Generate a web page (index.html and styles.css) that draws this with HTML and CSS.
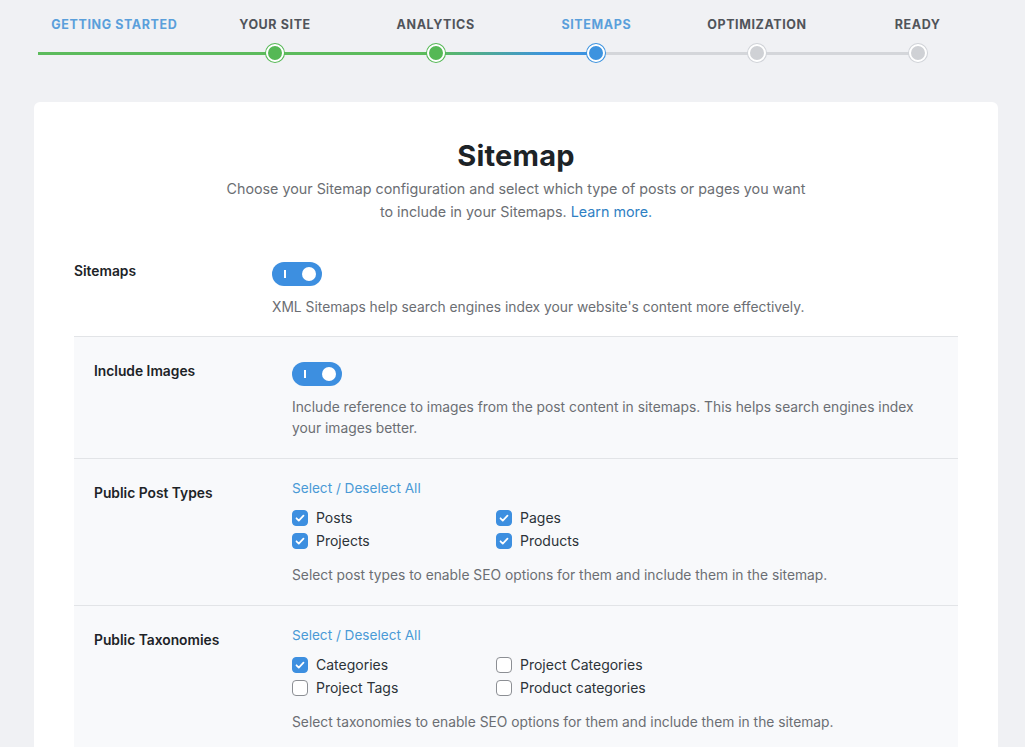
FILE: index.html
```html
<!DOCTYPE html>
<html lang="en">
<head>
    <meta charset="UTF-8">
    <meta name="viewport" content="width=device-width, initial-scale=1.0">
    <title>Setup Wizard - Sitemap</title>
    <link rel="stylesheet" href="styles.css">
</head>
<body>
    <div class="steps">
        <div class="step done first">
            <span class="step-label active">Getting Started</span>
        </div>
        <div class="step done">
            <span class="step-label">Your Site</span>
            <span class="step-line"></span>
            <span class="dot"></span>
        </div>
        <div class="step done">
            <span class="step-label">Analytics</span>
            <span class="step-line"></span>
            <span class="dot"></span>
        </div>
        <div class="step current">
            <span class="step-label active">Sitemaps</span>
            <span class="step-line"></span>
            <span class="dot"></span>
        </div>
        <div class="step">
            <span class="step-label">Optimization</span>
            <span class="step-line"></span>
            <span class="dot"></span>
        </div>
        <div class="step">
            <span class="step-label">Ready</span>
            <span class="step-line"></span>
            <span class="dot"></span>
        </div>
    </div>

    <div class="card">
        <h1>Sitemap</h1>
        <p class="intro">Choose your Sitemap configuration and select which type of posts or pages you want<br>to include in your Sitemaps. <a href="#">Learn more.</a></p>

        <div class="field">
            <div class="field-label">Sitemaps</div>
            <div class="field-body">
                <span class="toggle on"><span class="knob"></span></span>
                <p class="desc">XML Sitemaps help search engines index your website's content more effectively.</p>
            </div>
        </div>

        <div class="sub-fields">
            <div class="field">
                <div class="field-label">Include Images</div>
                <div class="field-body">
                    <span class="toggle on"><span class="knob"></span></span>
                    <p class="desc">Include reference to images from the post content in sitemaps. This helps search engines index your images better.</p>
                </div>
            </div>

            <div class="field">
                <div class="field-label">Public Post Types</div>
                <div class="field-body">
                    <a href="#" class="select-all">Select / Deselect All</a>
                    <div class="checks">
                        <label class="check"><input type="checkbox" checked> Posts</label>
                        <label class="check"><input type="checkbox" checked> Pages</label>
                        <label class="check"><input type="checkbox" checked> Projects</label>
                        <label class="check"><input type="checkbox" checked> Products</label>
                    </div>
                    <p class="desc">Select post types to enable SEO options for them and include them in the sitemap.</p>
                </div>
            </div>

            <div class="field">
                <div class="field-label">Public Taxonomies</div>
                <div class="field-body">
                    <a href="#" class="select-all">Select / Deselect All</a>
                    <div class="checks">
                        <label class="check"><input type="checkbox" checked> Categories</label>
                        <label class="check"><input type="checkbox"> Project Categories</label>
                        <label class="check"><input type="checkbox"> Project Tags</label>
                        <label class="check"><input type="checkbox"> Product categories</label>
                    </div>
                    <p class="desc">Select taxonomies to enable SEO options for them and include them in the sitemap.</p>
                </div>
            </div>
        </div>
    </div>
</body>
</html>
```

FILE: styles.css
```css
body {
    font-family: Inter, "Noto Sans", sans-serif;
    margin: 0;
    padding: 0;
    background-color: #f0f1f4;
    color: #1e1e1e;
}
.steps {
    display: grid;
    grid-template-columns: repeat(6, 1fr);
    margin: 0 27px 0 34px;
    padding-top: 16px;
}
.step {
    position: relative;
    display: flex;
    flex-direction: column;
    align-items: center;
    height: 48px;
}
.step-label {
    font-size: 12.5px;
    font-weight: 700;
    letter-spacing: 0.6px;
    text-transform: uppercase;
    color: #50545a;
    line-height: 18px;
}
.step-label.active {
    color: #5a9fdb;
}
.step-line {
    position: absolute;
    top: 36px;
    right: 50%;
    width: 100%;
    height: 3px;
    background-color: #d4d6da;
}
.step.done .step-line {
    background-color: #5cbb5c;
}
.step.done:nth-child(2) .step-line {
    width: calc(100% + 76px);
}
.step.current .step-line {
    background: linear-gradient(to right, #5cbb5c, #3d93df 70%);
}
.dot {
    position: absolute;
    z-index: 1;
    top: 28px;
    left: 50%;
    margin-left: -9px;
    width: 14px;
    height: 14px;
    border-radius: 50%;
    border: 2px solid #fff;
    box-shadow: 0 0 0 1px #d0d3d8;
    background-color: #cfd1d5;
}
.step.done .dot {
    background-color: #55b855;
    box-shadow: 0 0 0 1px #55b855;
}
.step.current .dot {
    background-color: #3d93df;
    box-shadow: 0 0 0 1px #3d93df;
}
.card {
    margin: 38px 27px 0 34px;
    background-color: #fff;
    border-radius: 6px;
    padding: 28px 40px 40px;
}
h1 {
    text-align: center;
    font-size: 29px;
    font-weight: 700;
    margin: 8px 0 4px;
    color: #1d2327;
    letter-spacing: 0.2px;
}
.intro {
    text-align: center;
    font-size: 14.3px;
    line-height: 23px;
    color: #6b6e73;
    margin: 0 0 39px;
}
.intro a,
.select-all {
    color: #2f80c3;
    text-decoration: none;
}
.select-all {
    font-size: 13.6px;
    line-height: 16px;
    color: #4a9ad6;
    display: block;
    margin: -4px 0 12px;
}
.field {
    display: grid;
    grid-template-columns: 198px 1fr;
    padding-bottom: 18px;
    border-bottom: 1px solid #e2e4e7;
}
.field-label {
    font-size: 13.8px;
    font-weight: 600;
    color: #1d2327;
    padding-top: 1px;
}
.toggle {
    display: inline-block;
    vertical-align: top;
    position: relative;
    width: 50px;
    height: 24px;
    border-radius: 12px;
    background-color: #3d8fe0;
}
.toggle::before {
    content: "";
    position: absolute;
    left: 12px;
    top: 8px;
    width: 2px;
    height: 8px;
    background-color: #fff;
}
.knob {
    position: absolute;
    right: 6px;
    top: 5px;
    width: 14px;
    height: 14px;
    border-radius: 50%;
    background-color: #fff;
}
.desc {
    font-size: 13.8px;
    line-height: 21px;
    color: #6b6e73;
    margin: 11px 0 0;
}
.sub-fields {
    background-color: #f8f9fb;
}
.sub-fields .field {
    padding: 25px 20px 19px;
}
.checks {
    display: grid;
    grid-template-columns: 204px 204px;
    row-gap: 3px;
}
.check {
    display: flex;
    align-items: center;
    font-size: 14px;
    color: #2c3338;
    line-height: 20px;
}
.check input {
    appearance: none;
    width: 16px;
    height: 16px;
    margin: 0 8px 0 0;
    border: 1px solid #8c8f94;
    border-radius: 4px;
    background-color: #fff;
}
.check input:checked {
    border-color: #3d8fe0;
    background: #3d8fe0 url("data:image/svg+xml,%3Csvg xmlns='http://www.w3.org/2000/svg' viewBox='0 0 16 16'%3E%3Cpath d='M4 8.3l2.6 2.6L12 5.3' fill='none' stroke='white' stroke-width='2' stroke-linecap='round' stroke-linejoin='round'/%3E%3C/svg%3E") center / 14px no-repeat;
}
.field-body .checks + .desc {
    margin-top: 14px;
}
```
